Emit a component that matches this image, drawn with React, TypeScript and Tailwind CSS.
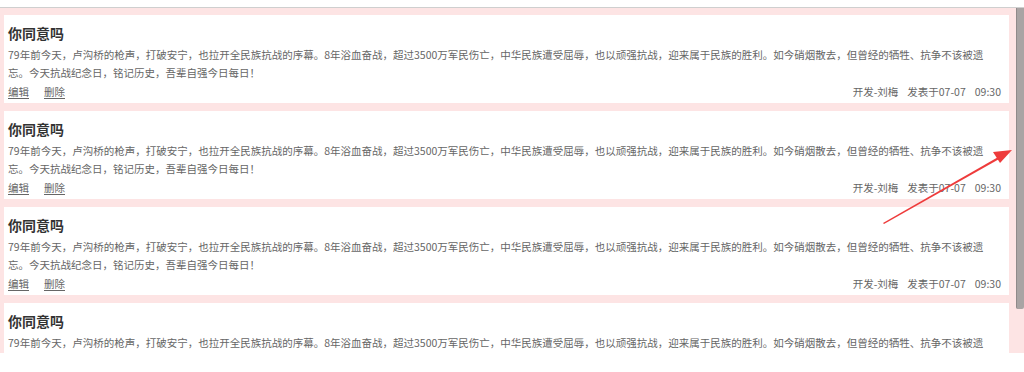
import React from 'react';

const posts = [1, 2, 3, 4].map((id) => ({
  id,
  title: '你同意吗',
  body:
    '79年前今天，卢沟桥的枪声，打破安宁，也拉开全民族抗战的序幕。8年浴血奋战，超过3500万军民伤亡，中华民族遭受屈辱，也以顽强抗战，迎来属于民族的胜利。如今硝烟散去，但曾经的牺牲、抗争不该被遗忘。今天抗战纪念日，铭记历史，吾辈自强今日每日！',
  author: '开发-刘梅',
  date: '发表于07-07',
  time: '09:30',
}));

function PostCard({ post }: { post: (typeof posts)[number] }) {
  return (
    <div className="bg-white h-[88px] shrink-0 pt-[8px] pl-[4px] pr-[8px] overflow-hidden">
      <h3 className="text-[14px] leading-[20px] font-bold text-[#333]">{post.title}</h3>
      <p className="mt-[3px] text-[10.5px] leading-[18px] text-[#666]">{post.body}</p>
      <div className="mt-[1px] flex items-center justify-between text-[10.5px] leading-[18px] text-[#666]">
        <div className="flex gap-[15px]">
          <a className="underline underline-offset-2 cursor-pointer">编辑</a>
          <a className="underline underline-offset-2 cursor-pointer">删除</a>
        </div>
        <div className="flex gap-[9px]">
          <span>{post.author}</span>
          <span>{post.date}</span>
          <span>{post.time}</span>
        </div>
      </div>
    </div>
  );
}

export default function App() {
  return (
    <div
      className="relative w-[1024px] h-[372px] bg-white overflow-hidden"
      style={{ fontFamily: '"Noto Sans CJK SC", "Liberation Sans", sans-serif' }}
    >
      <div className="mt-[7px] h-[346px] border-t border-[#cfcfcf] bg-[#fde4e4] flex">
        {/* list */}
        <div className="flex-1 overflow-hidden pt-[7px] pl-[4px] pr-[7px] flex flex-col gap-[8px]">
          {posts.map((p) => (
            <PostCard key={p.id} post={p} />
          ))}
        </div>
        {/* scrollbar */}
        <div className="w-[8px] shrink-0">
          <div className="h-[301px] border-l border-[#8f8a8a] bg-[#a9a4a4] rounded-b-[2px]" />
        </div>
      </div>

      {/* annotation arrow */}
      <svg className="absolute inset-0 pointer-events-none" width="1024" height="372">
        <polygon points="883,223 1000,156 1001,158 884,224" fill="#ee3b3b" />
        <polygon points="1012,150 993,152 1000,163" fill="#ee3b3b" />
      </svg>
    </div>
  );
}
